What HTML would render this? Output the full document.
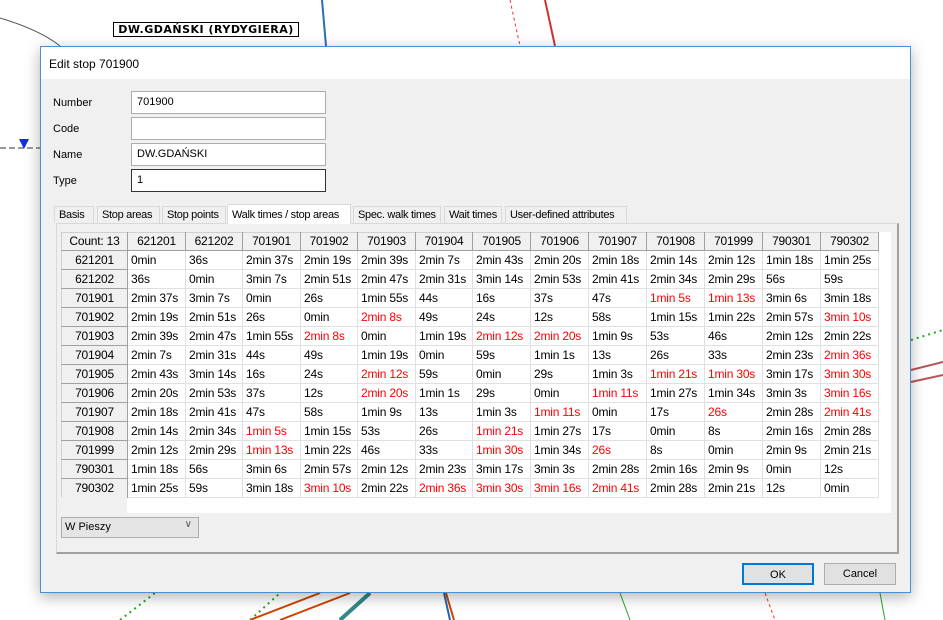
<!DOCTYPE html>
<html><head><meta charset="utf-8"><style>
*{box-sizing:border-box;margin:0;padding:0}
body{width:943px;height:620px;position:relative;overflow:hidden;background:#fff;font-family:"Liberation Sans",sans-serif;font-size:12px;color:#000}
.abs{position:absolute}
#dlg{left:40px;top:46px;width:871px;height:547px;border:1px solid #4a90d0;background:#f0f0f0;box-shadow:0 4px 14px rgba(0,0,0,.3)}
#title{left:0;top:0;width:869px;height:32px;background:#fff;font-size:12px;padding:10px 8px}
.lbl{left:12px;font-size:11px}
.inp{left:90px;width:195px;height:23px;background:#fff;border:1px solid #adadad;font-size:11px;padding:4px 5px}
.tab{top:159px;height:17px;border:1px solid #d9d9d9;border-bottom:none;background:#f0f0f0;font-size:11px;padding:2px 4px;white-space:nowrap;letter-spacing:-0.3px;overflow:hidden}
#panel{left:15px;top:176px;width:843px;height:331px;border:1px solid #d9d9d9;border-right:2px solid #a0a0a0;border-bottom:2px solid #a0a0a0;background:#f0f0f0}
#grid{left:20px;top:185px;width:830px;height:281px;background:#fff}
table{border-collapse:collapse;table-layout:fixed;width:817px;font-size:12px;letter-spacing:-0.2px}
td{height:19px;border:1px solid #e0e0e0;padding:0 3px;white-space:nowrap;overflow:hidden;line-height:17px}
tr.h td{background:#f0f0f0;text-align:center;border-color:#d0d0d0 #a0a0a0 #a0a0a0 #d0d0d0;height:18px}
td.r{background:#f0f0f0;text-align:center;border-color:#d0d0d0 #a0a0a0 #a0a0a0 #d0d0d0}
.x{color:#f00}
.btn{top:516px;height:22px;width:72px;border:1px solid #adadad;background:#e1e1e1;text-align:center;font-size:11px;line-height:20px}
</style></head><body>
<svg class="abs" style="left:0;top:0" width="943" height="620">
<path d="M0 18 Q40 30 60 46" stroke="#555" fill="none"/>
<line x1="322" y1="0" x2="326" y2="46" stroke="#2a6fb0" stroke-width="2"/>
<line x1="510" y1="0" x2="520" y2="46" stroke="#e33" stroke-dasharray="3 3"/>
<line x1="545" y1="0" x2="555" y2="46" stroke="#c33" stroke-width="2"/>
<line x1="0" y1="148" x2="40" y2="148" stroke="#333" stroke-dasharray="6 3"/>
<polygon points="19,139 29,139 24,149" fill="#1030e0"/>
<line x1="911" y1="340" x2="943" y2="330" stroke="#2a2" stroke-dasharray="2 4" stroke-width="2"/>
<line x1="911" y1="370" x2="943" y2="362" stroke="#b55" stroke-width="2"/>
<line x1="911" y1="382" x2="943" y2="375" stroke="#b55" stroke-width="2"/>
<line x1="250" y1="620" x2="320" y2="593" stroke="#c40" stroke-width="2"/>
<line x1="280" y1="620" x2="350" y2="593" stroke="#c40" stroke-width="2"/>
<line x1="340" y1="620" x2="370" y2="593" stroke="#388" stroke-width="4"/>
<line x1="120" y1="620" x2="155" y2="593" stroke="#2a2" stroke-dasharray="2 4" stroke-width="2"/>
<line x1="250" y1="620" x2="280" y2="593" stroke="#2a2" stroke-dasharray="2 4" stroke-width="2"/>
<line x1="620" y1="593" x2="630" y2="620" stroke="#2a2"/>
<line x1="880" y1="593" x2="885" y2="620" stroke="#2a2"/>
<line x1="444" y1="593" x2="450" y2="620" stroke="#26a" stroke-width="2"/>
<line x1="446" y1="593" x2="454" y2="620" stroke="#c40" stroke-width="2"/>
<line x1="765" y1="593" x2="775" y2="620" stroke="#e33" stroke-dasharray="3 3"/>
</svg>
<div class="abs" style="left:113px;top:22px;width:186px;height:15px;border:1px solid #000;background:#fff;font-weight:bold;line-height:13px;text-align:center;letter-spacing:.5px;font-family:'DejaVu Sans',sans-serif;font-size:11px">DW.GDAŃSKI (RYDYGIERA)</div>
<div id="dlg" class="abs">
<div id="title" class="abs">Edit stop 701900</div>
<div class="abs lbl" style="top:50px">Number</div><div class="abs inp" style="top:44px">701900</div>
<div class="abs lbl" style="top:76px">Code</div><div class="abs inp" style="top:70px"></div>
<div class="abs lbl" style="top:102px">Name</div><div class="abs inp" style="top:96px">DW.GDAŃSKI</div>
<div class="abs lbl" style="top:128px">Type</div><div class="abs inp" style="top:122px;border-color:#333">1</div>
<div id="panel" class="abs"></div>
<div class="abs tab" style="left:13px;width:40px">Basis</div>
<div class="abs tab" style="left:56px;width:63px">Stop areas</div>
<div class="abs tab" style="left:121px;width:64px">Stop points</div>
<div class="abs tab" style="left:186px;top:157px;height:20px;width:124px;background:#fff;border-color:#d9d9d9;padding-top:4px;z-index:2">Walk times / stop areas</div>
<div class="abs tab" style="left:312px;width:88px">Spec. walk times</div>
<div class="abs tab" style="left:403px;width:58px">Wait times</div>
<div class="abs tab" style="left:464px;width:122px">User-defined attributes</div>
<div id="grid" class="abs">
<table style="position:absolute;left:0;top:0">
<colgroup><col style="width:66px"><col style="width:58px"><col style="width:57px"><col style="width:58px"><col style="width:57px"><col style="width:58px"><col style="width:57px"><col style="width:58px"><col style="width:58px"><col style="width:58px"><col style="width:58px"><col style="width:58px"><col style="width:58px"><col style="width:58px"></colgroup>
<tr class="h"><td>Count: 13</td><td>621201</td><td>621202</td><td>701901</td><td>701902</td><td>701903</td><td>701904</td><td>701905</td><td>701906</td><td>701907</td><td>701908</td><td>701999</td><td>790301</td><td>790302</td></tr>
<tr><td class="r">621201</td><td>0min</td><td>36s</td><td>2min 37s</td><td>2min 19s</td><td>2min 39s</td><td>2min 7s</td><td>2min 43s</td><td>2min 20s</td><td>2min 18s</td><td>2min 14s</td><td>2min 12s</td><td>1min 18s</td><td>1min 25s</td></tr>
<tr><td class="r">621202</td><td>36s</td><td>0min</td><td>3min 7s</td><td>2min 51s</td><td>2min 47s</td><td>2min 31s</td><td>3min 14s</td><td>2min 53s</td><td>2min 41s</td><td>2min 34s</td><td>2min 29s</td><td>56s</td><td>59s</td></tr>
<tr><td class="r">701901</td><td>2min 37s</td><td>3min 7s</td><td>0min</td><td>26s</td><td>1min 55s</td><td>44s</td><td>16s</td><td>37s</td><td>47s</td><td class="x">1min 5s</td><td class="x">1min 13s</td><td>3min 6s</td><td>3min 18s</td></tr>
<tr><td class="r">701902</td><td>2min 19s</td><td>2min 51s</td><td>26s</td><td>0min</td><td class="x">2min 8s</td><td>49s</td><td>24s</td><td>12s</td><td>58s</td><td>1min 15s</td><td>1min 22s</td><td>2min 57s</td><td class="x">3min 10s</td></tr>
<tr><td class="r">701903</td><td>2min 39s</td><td>2min 47s</td><td>1min 55s</td><td class="x">2min 8s</td><td>0min</td><td>1min 19s</td><td class="x">2min 12s</td><td class="x">2min 20s</td><td>1min 9s</td><td>53s</td><td>46s</td><td>2min 12s</td><td>2min 22s</td></tr>
<tr><td class="r">701904</td><td>2min 7s</td><td>2min 31s</td><td>44s</td><td>49s</td><td>1min 19s</td><td>0min</td><td>59s</td><td>1min 1s</td><td>13s</td><td>26s</td><td>33s</td><td>2min 23s</td><td class="x">2min 36s</td></tr>
<tr><td class="r">701905</td><td>2min 43s</td><td>3min 14s</td><td>16s</td><td>24s</td><td class="x">2min 12s</td><td>59s</td><td>0min</td><td>29s</td><td>1min 3s</td><td class="x">1min 21s</td><td class="x">1min 30s</td><td>3min 17s</td><td class="x">3min 30s</td></tr>
<tr><td class="r">701906</td><td>2min 20s</td><td>2min 53s</td><td>37s</td><td>12s</td><td class="x">2min 20s</td><td>1min 1s</td><td>29s</td><td>0min</td><td class="x">1min 11s</td><td>1min 27s</td><td>1min 34s</td><td>3min 3s</td><td class="x">3min 16s</td></tr>
<tr><td class="r">701907</td><td>2min 18s</td><td>2min 41s</td><td>47s</td><td>58s</td><td>1min 9s</td><td>13s</td><td>1min 3s</td><td class="x">1min 11s</td><td>0min</td><td>17s</td><td class="x">26s</td><td>2min 28s</td><td class="x">2min 41s</td></tr>
<tr><td class="r">701908</td><td>2min 14s</td><td>2min 34s</td><td class="x">1min 5s</td><td>1min 15s</td><td>53s</td><td>26s</td><td class="x">1min 21s</td><td>1min 27s</td><td>17s</td><td>0min</td><td>8s</td><td>2min 16s</td><td>2min 28s</td></tr>
<tr><td class="r">701999</td><td>2min 12s</td><td>2min 29s</td><td class="x">1min 13s</td><td>1min 22s</td><td>46s</td><td>33s</td><td class="x">1min 30s</td><td>1min 34s</td><td class="x">26s</td><td>8s</td><td>0min</td><td>2min 9s</td><td>2min 21s</td></tr>
<tr><td class="r">790301</td><td>1min 18s</td><td>56s</td><td>3min 6s</td><td>2min 57s</td><td>2min 12s</td><td>2min 23s</td><td>3min 17s</td><td>3min 3s</td><td>2min 28s</td><td>2min 16s</td><td>2min 9s</td><td>0min</td><td>12s</td></tr>
<tr><td class="r">790302</td><td>1min 25s</td><td>59s</td><td>3min 18s</td><td class="x">3min 10s</td><td>2min 22s</td><td class="x">2min 36s</td><td class="x">3min 30s</td><td class="x">3min 16s</td><td class="x">2min 41s</td><td>2min 28s</td><td>2min 21s</td><td>12s</td><td>0min</td></tr>
</table>
<div class="abs" style="left:0;top:265px;width:66px;height:16px;background:#f0f0f0"></div>
</div>
<div class="abs" style="left:20px;top:470px;width:138px;height:21px;border:1px solid #adadad;background:#e5e5e5;font-size:11px;padding:3px 3px">W Pieszy<span style="position:absolute;right:6px;top:1px;color:#555;font-size:10px">&#8744;</span></div>
<div class="abs btn" style="left:701px;border:2px solid #0078d7">OK</div>
<div class="abs btn" style="left:783px">Cancel</div>
</div>
</body></html>
